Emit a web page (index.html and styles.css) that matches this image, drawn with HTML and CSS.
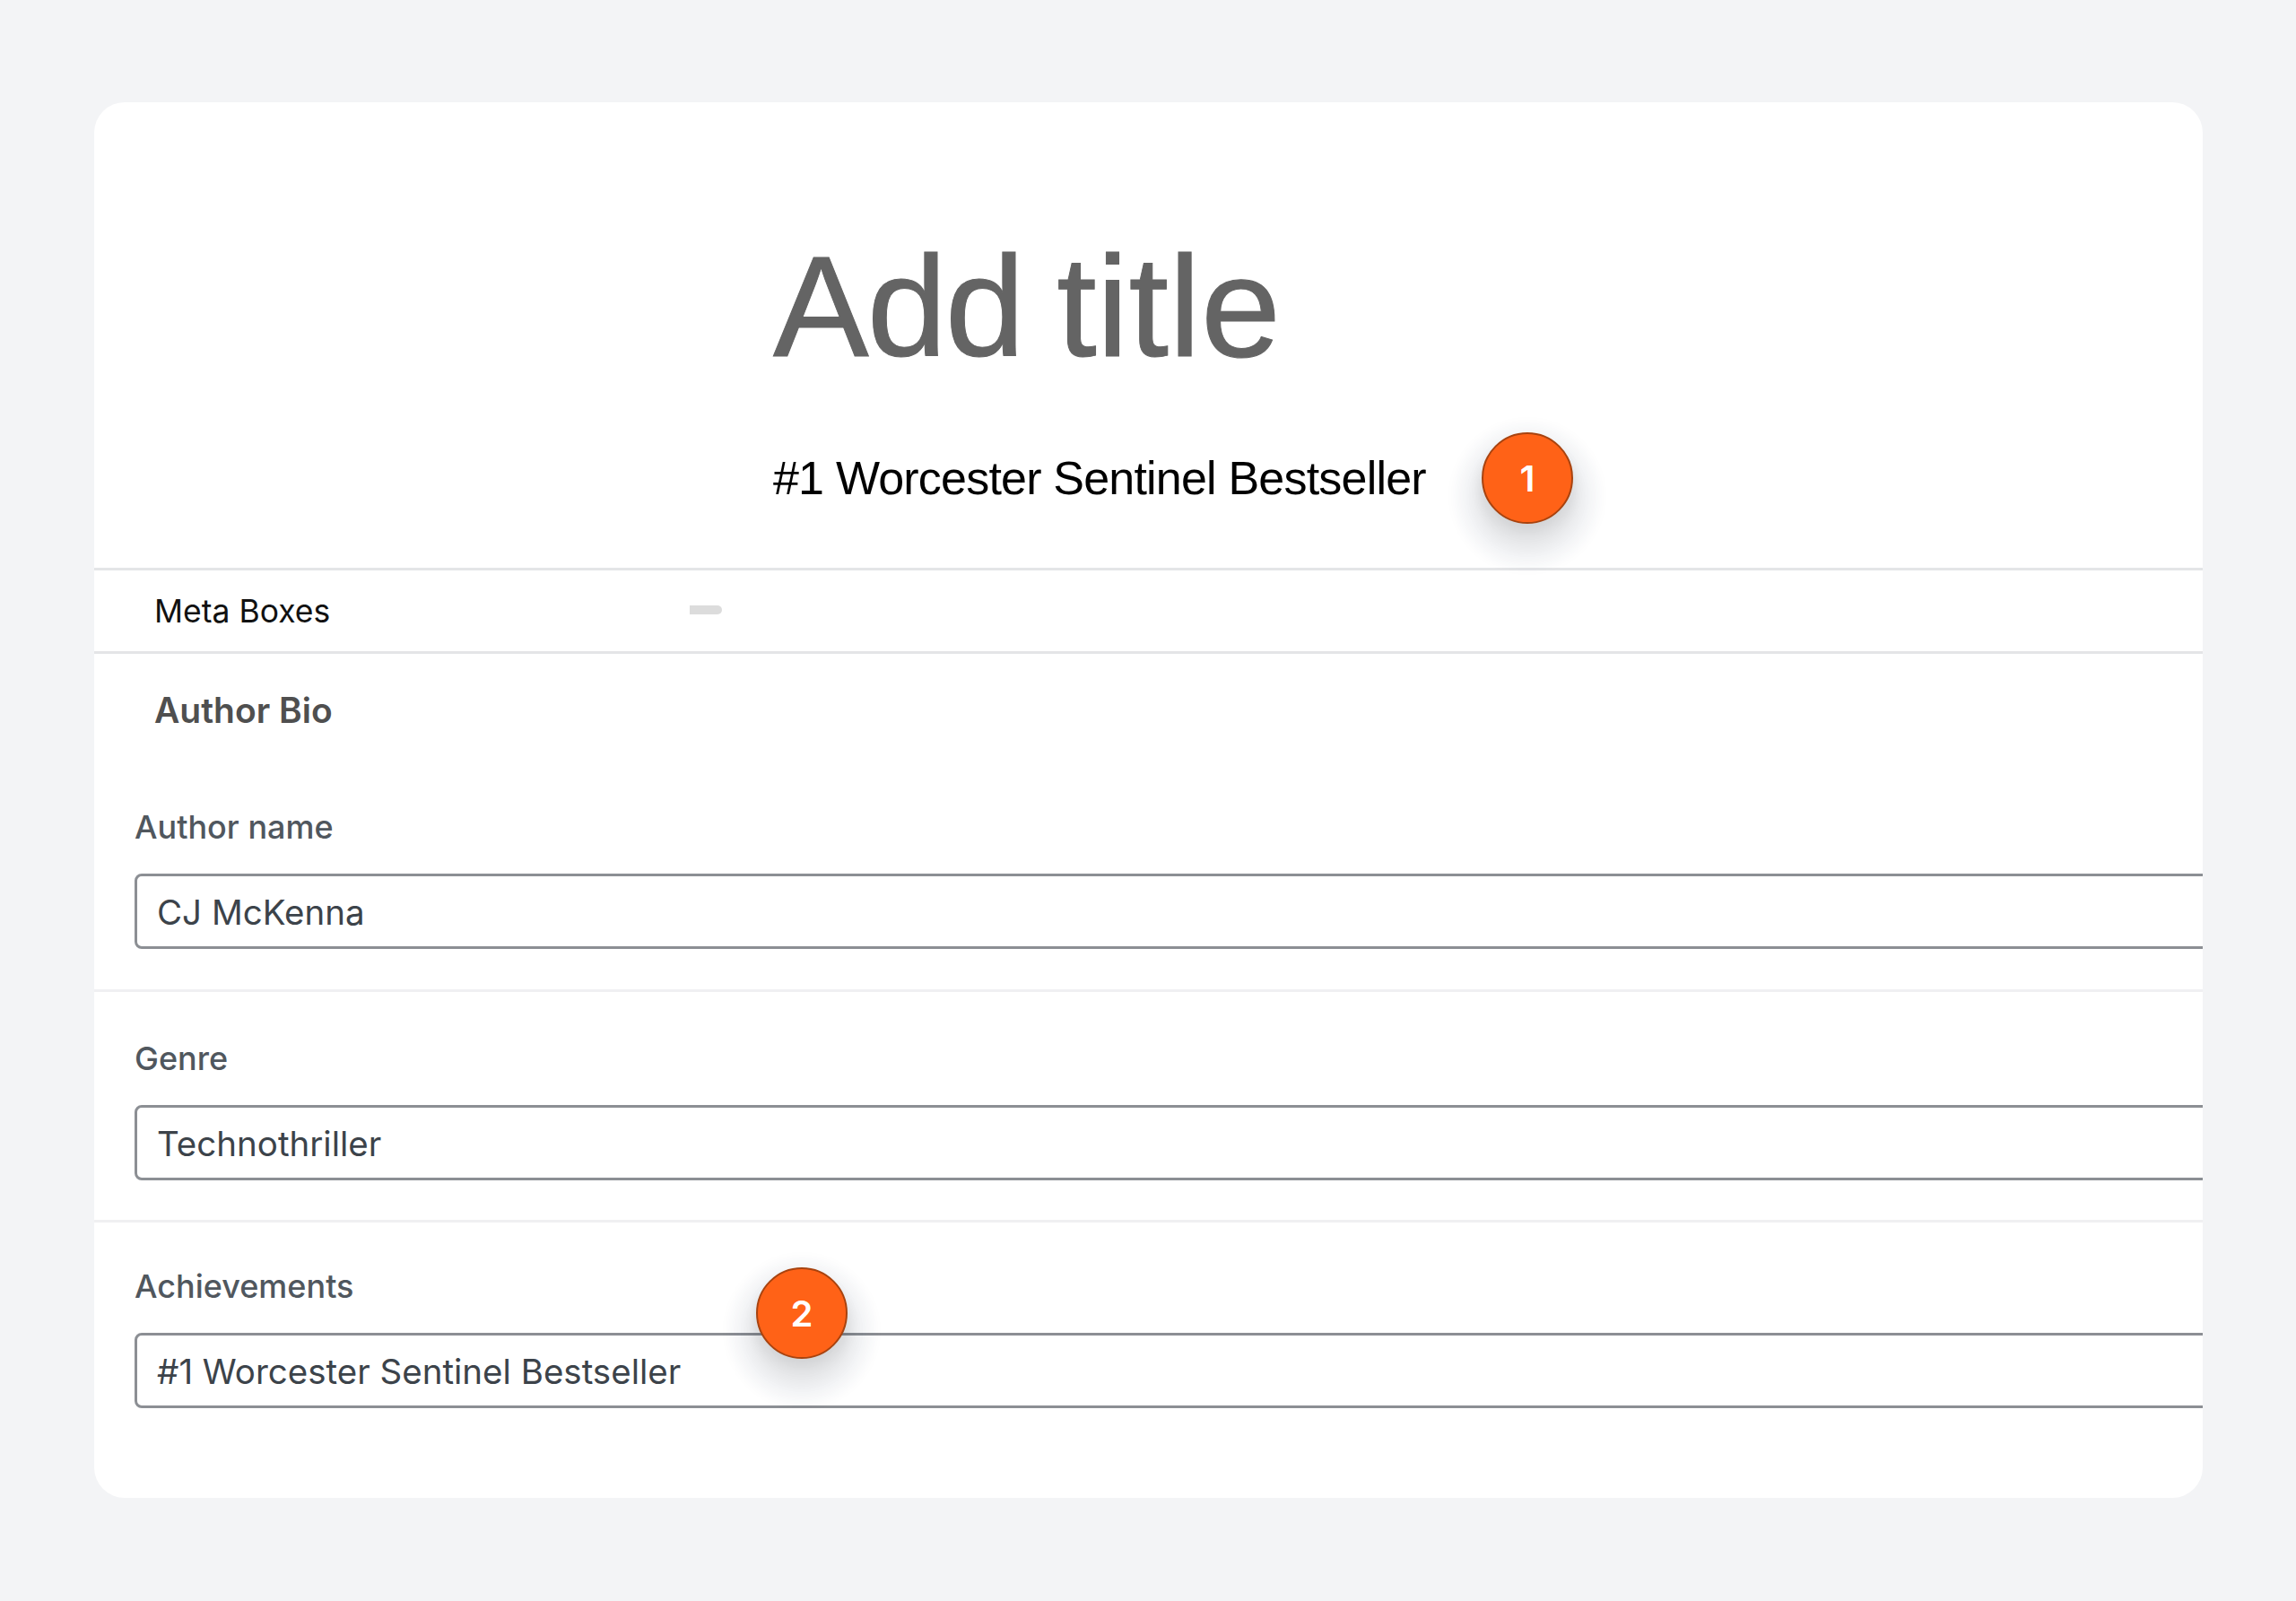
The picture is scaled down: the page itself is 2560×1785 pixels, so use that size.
FILE: index.html
```html
<!DOCTYPE html>
<html lang="en">
<head>
<meta charset="utf-8">
<title>Author Bio</title>
<link rel="stylesheet" href="styles.css">
</head>
<body>
<main class="card">
  <header class="editor">
    <h1 class="title">Add <span class="title-word">title</span></h1>
    <p class="subtitle">#1 Worcester Sentinel Bestseller</p>
  </header>
  <div class="meta-bar">
    <span class="meta-label">Meta Boxes</span>
    <span class="pill"></span>
  </div>
  <h2 class="box-title">Author Bio</h2>
  <section class="field field-first">
    <div class="label">Author name</div>
    <div class="input">CJ McKenna</div>
  </section>
  <section class="field">
    <div class="label">Genre</div>
    <div class="input">Technothriller</div>
  </section>
  <section class="field field-last">
    <div class="label">Achievements</div>
    <div class="input">#1 Worcester Sentinel Bestseller</div>
  </section>
  <div class="badge badge-one">1</div>
  <div class="badge badge-two">2</div>
</main>
</body>
</html>
```
FILE: styles.css
```css
* { box-sizing: border-box; }
html, body { margin: 0; height: 100%; }
body {
  background: #f3f4f6;
  padding: 114px 104px 115px 105px;
  font-family: "Liberation Sans", Arial, sans-serif;
}
.card {
  position: relative;
  height: 1556px;
  background: #fff;
  border-radius: 34px;
  overflow: hidden;
}
.editor {
  height: 522px;
  padding: 153px 0 0 757px;
  border-bottom: 3px solid #e4e5e7;
}
.title {
  margin: 0;
  font-size: 160px;
  line-height: 150px;
  font-weight: 400;
  letter-spacing: -2px;
  word-spacing: -5px;
  -webkit-text-stroke: 1px #646464;
  color: #646464;
}
.title-word { letter-spacing: .2px; }
.subtitle {
  margin: 86px 0 0;
  font-size: 52px;
  line-height: 60px;
  letter-spacing: -.8px;
  color: #000;
}
.meta-bar {
  height: 93px;
  display: flex;
  align-items: center;
  padding-left: 67px;
  border-bottom: 3px solid #e4e5e7;
}
.meta-label {
  width: 597px;
  font-family: Inter, sans-serif;
  font-size: 35.5px;
  color: #111;
}
.pill {
  width: 36px;
  height: 10px;
  margin-top: -2px;
  border-radius: 0 5px 5px 0;
  background: #dcdcdc;
}
.box-title {
  margin: 0;
  padding: 38px 0 0 67px;
  height: 145px;
  font-family: Inter, sans-serif;
  font-size: 39px;
  line-height: 50px;
  font-weight: 600;
  color: #4f4f4f;
}
.field {
  padding: 52px 0 0 45px;
  height: 257px;
  border-bottom: 3px solid #f0f0f2;
}
.field-first { height: 232px; padding-top: 26px; }
.field-last { border-bottom: 0; height: 300px; padding-top: 49px; }
.label {
  font-family: Inter, sans-serif;
  font-size: 36px;
  line-height: 44px;
  font-weight: 500;
  color: #50575e;
}
.input {
  margin-top: 30px;
  margin-right: -40px;
  height: 84px;
  padding-left: 22px;
  border: 3px solid #8c8f94;
  border-radius: 8px;
  font-family: Inter, sans-serif;
  font-size: 38.5px;
  line-height: 80px;
  color: #3c434a;
  background: #fff;
}
.badge {
  position: absolute;
  width: 102px;
  height: 102px;
  display: flex;
  align-items: center;
  justify-content: center;
  border-radius: 50%;
  border: 2px solid #a8430f;
  background: #ff6217;
  color: #fff;
  font-family: Inter, sans-serif;
  font-size: 40px;
  font-weight: 600;
  box-shadow: 0 10px 14px rgba(0, 0, 0, .08), 0 20px 14px 8px rgba(0, 0, 0, .05), 0 20px 16px 26px rgba(40, 50, 80, .06);
}
.badge-one { left: 1547px; top: 368px; }
.badge-two { left: 738px; top: 1299px; }
```
